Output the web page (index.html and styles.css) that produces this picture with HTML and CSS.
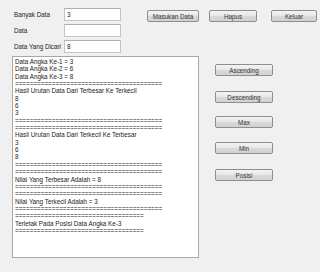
FILE: index.html
```html
<!DOCTYPE html>
<html>
<head>
    <title>Pengurutan Data</title>
    <link rel="stylesheet" href="styles.css">
</head>
<body>
    <div class="top">
        <div class="fields">
            <label for="banyak">Banyak Data</label>
            <input type="text" id="banyak" value="3">
            <label for="data">Data</label>
            <input type="text" id="data" value="">
            <label for="cari">Data Yang Dicari</label>
            <input type="text" id="cari" value="8">
        </div>
        <div class="actions">
            <button class="btn btn-masuk">Masukan Data</button>
            <button class="btn btn-hapus">Hapus</button>
            <button class="btn btn-keluar">Keluar</button>
        </div>
    </div>

    <div class="main">
        <div class="memo">
            <div>Data Angka Ke-1 = 3</div>
            <div>Data Angka Ke-2 = 6</div>
            <div>Data Angka Ke-3 = 8</div>
            <div>========================================</div>
            <div>Hasil Urutan Data Dari Terbesar Ke Terkecil</div>
            <div>8</div>
            <div>6</div>
            <div>3</div>
            <div>========================================</div>
            <div>========================================</div>
            <div>Hasil Urutan Data Dari Terkecil Ke Terbesar</div>
            <div>3</div>
            <div>6</div>
            <div>8</div>
            <div>========================================</div>
            <div>========================================</div>
            <div>Nilai Yang Terbesar Adalah = 8</div>
            <div>========================================</div>
            <div>========================================</div>
            <div>Nilai Yang Terkecil Adalah = 3</div>
            <div>========================================</div>
            <div>===================================</div>
            <div>Terletak Pada Posisi Data Angka Ke-3</div>
            <div>===================================</div>
        </div>
        <div class="side">
            <button class="btn side-btn b-asc">Ascending</button>
            <button class="btn side-btn b-desc">Descending</button>
            <button class="btn side-btn b-max">Max</button>
            <button class="btn side-btn b-min">Min</button>
            <button class="btn side-btn b-pos">Posisi</button>
        </div>
    </div>
</body>
</html>
```

FILE: styles.css
```css
body {
    margin: 0;
    background: #f0f0f0;
    font-family: "Liberation Sans", Arial, sans-serif;
    font-size: 6.3px;
    color: #222;
    width: 320px;
    height: 272px;
    overflow: hidden;
}
.top {
    display: flex;
    padding-top: 8px;
}
.fields {
    display: grid;
    grid-template-columns: 50px 57px;
    grid-auto-rows: 13px;
    row-gap: 3px;
    margin-left: 14px;
    align-items: center;
}
.fields input {
    box-sizing: border-box;
    width: 57px;
    height: 13px;
    margin: 0;
    padding: 0 2px;
    border: 1px solid #c4c4c4;
    border-top-color: #aeaeae;
    background: #fff;
    font: inherit;
    color: #222;
    outline: none;
}
.actions {
    display: flex;
    align-items: flex-start;
    margin-left: 26px;
    padding-top: 2px;
}
.btn {
    box-sizing: border-box;
    height: 12px;
    margin: 0;
    padding: 0;
    border: 1px solid #8e8e8e;
    border-radius: 2px;
    background: linear-gradient(#f4f4f4, #e6e6e6 50%, #d9d9d9 51%, #d2d2d2);
    font: inherit;
    color: #333;
}
.btn-masuk { width: 52px; }
.btn-hapus { width: 48px; margin-left: 10px; }
.btn-keluar { width: 46px; margin-left: 14px; }
.main {
    display: flex;
    margin-top: 3px;
}
.memo {
    box-sizing: border-box;
    width: 187px;
    height: 202px;
    margin-left: 12px;
    padding: 1px 2px;
    border: 1px solid #a8a8a8;
    background: #fff;
    line-height: 7.35px;
    white-space: nowrap;
    overflow: hidden;
}
.side {
    display: flex;
    flex-direction: column;
    margin-left: 16px;
}
.side-btn { width: 58px; }
.b-asc { margin-top: 8px; }
.b-desc { margin-top: 15px; }
.b-max { margin-top: 13px; }
.b-min { margin-top: 14px; }
.b-pos { margin-top: 15px; }
```
